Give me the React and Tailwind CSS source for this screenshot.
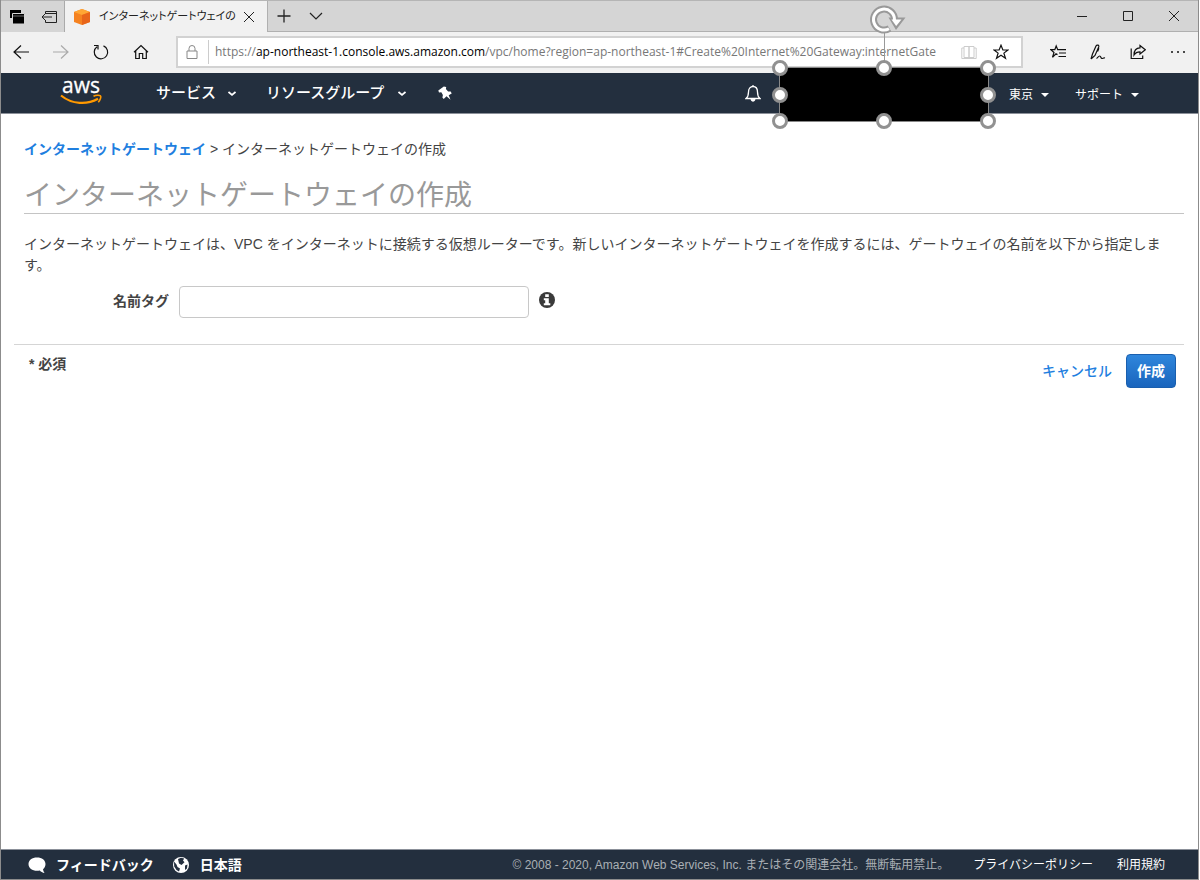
import { useState } from "react";

const jpFont = "font-['Liberation_Sans','Noto_Sans_CJK_JP',sans-serif]";

const Icon = ({ className = "w-4 h-4", viewBox = "0 0 16 16", children }) => (
  <svg
    className={`shrink-0 ${className}`}
    viewBox={viewBox}
    fill="none"
    stroke="currentColor"
    aria-hidden="true"
  >
    {children}
  </svg>
);

const Star = () => (
  <path
    d="M8 1.2 9.9 6h5l-4 3.1 1.6 5.2L8 11.2l-4.5 3.1 1.6-5.2-4-3.1h5z"
    strokeWidth="1.2"
  />
);

const TabStrip = () => (
  <div className="flex h-8 items-stretch border-t border-[#b5b5b5] bg-[#d5d5d5] text-[#222]">
    <div className="flex w-16 items-center gap-4 border-r border-[#aaa] pl-2">
      <button aria-label="保存済みのタブ">
        <Icon className="h-4 w-4">
          <path d="M1 1h11v8H1z" fill="#000" stroke="none" />
          <path d="M3.500 4.500h12v10.500h-12z" fill="#000" stroke="#d5d5d5" />
          <path d="M4 7h11" stroke="#d5d5d5" strokeWidth="0.500" />
        </Icon>
      </button>
      <button aria-label="タブを保存して閉じる">
        <Icon className="h-4 w-4">
          <path d="M4.500 5V2.500h11v11h-11V11M4.500 4.500h11M1 8h10M4 5 1 8l3 3" />
        </Icon>
      </button>
    </div>
    <div className="flex w-[202px] items-center bg-[#f1f1f1] pl-2">
      <svg className="h-[18px] w-[18px] shrink-0" viewBox="0 0 18 18" aria-hidden="true">
        <path d="M9 1l8 3v10l-8 3-8-3V4z" fill="#f58220" />
        <path d="M9 1l8 3-8 3-8-3z" fill="#ffa634" />
        <path d="M9 7l8-3v10l-8 3z" fill="#e8651a" />
      </svg>
      <span className="ml-2 w-[136px] text-[11px] whitespace-nowrap [font-feature-settings:'palt']">
        インターネットゲートウェイの
      </span>
      <button className="ml-1.5" aria-label="タブを閉じる">
        <Icon className="h-4 w-4">
          <path d="M3 3l10 10M13 3 3 13" />
        </Icon>
      </button>
    </div>
    <div className="flex flex-1 items-center gap-4 border-b border-l border-[#b0b0b0] pl-2">
      <button aria-label="新しいタブ">
        <Icon className="h-4 w-4">
          <path d="M8 1.500v13M1.500 8h13" strokeWidth="1.300" />
        </Icon>
      </button>
      <button aria-label="タブのプレビュー">
        <Icon className="h-4 w-4">
          <path d="M2 5l6 6 6-6" strokeWidth="1.200" />
        </Icon>
      </button>
      <div className="ml-auto flex items-center gap-[30px] pr-4">
        <button aria-label="最小化">
          <Icon>
            <path d="M3 8.500h10" />
          </Icon>
        </button>
        <button aria-label="最大化">
          <Icon>
            <path d="M3.500 3.500h9v9h-9z" />
          </Icon>
        </button>
        <button aria-label="閉じる">
          <Icon>
            <path d="M3 3l10 10M13 3 3 13" />
          </Icon>
        </button>
      </div>
    </div>
  </div>
);

const AddressBar = () => (
  <div className="flex h-[41px] items-center bg-[#f1f1f1] pb-px text-[#111]">
    <div className="flex items-center gap-6 pl-3">
      <button aria-label="戻る">
        <Icon>
          <path d="M16 8H1M8 1.500 1 8l7 6.500" strokeWidth="1.200" />
        </Icon>
      </button>
      <button className="text-[#aaa]" aria-label="進む">
        <Icon>
          <path d="M0 8h15M8 1.500 15 8l-7 6.500" strokeWidth="1.200" />
        </Icon>
      </button>
      <button aria-label="更新">
        <Icon>
          <path d="M10.500 1.900A6.700 6.700 0 1 1 4 2.700M1 1.500h4v4" strokeWidth="1.200" />
        </Icon>
      </button>
      <button aria-label="ホーム">
        <Icon>
          <path
            d="M1 8.200 8 1.500l7 6.700M2.700 7v7.500h3.600V9.500h3.400v5h3.600V7"
            strokeWidth="1.200"
          />
        </Icon>
      </button>
    </div>
    <div className="ml-[27px] flex h-8 w-[847px] min-w-0 items-center border-2 border-[#d2d2d2] bg-white pl-1.5">
      <Icon className="h-4 w-4 text-[#888]">
        <path d="M3 7h10v7.500H3zM5 7V4.500a3 3 0 0 1 6 0V7" />
      </Icon>
      <div className="ml-2 h-6 border-l border-[#ccc]" />
      <div className="ml-1.5 min-w-0 flex-1 font-['Open_Sans',sans-serif] text-xs whitespace-nowrap text-[#777]">
        https://<span className="text-black">ap-northeast-1.console.aws.amazon.com</span>
        /vpc/home?region=ap-northeast-1#Create%20Internet%20Gateway:internetGate
      </div>
      <button className="ml-2.5 text-[#ccc]" aria-label="読み取りビュー">
        <Icon>
          <path d="M3 2.500h5v11H3zM8 2.500h5v11H8zM3 4H.8v10.500h14.400V4H13" />
        </Icon>
      </button>
      <button className="mr-3 ml-4" aria-label="お気に入りに追加">
        <Icon>
          <Star />
        </Icon>
      </button>
    </div>
    <div className="ml-auto flex items-center gap-6 pr-3">
      <button aria-label="お気に入り">
        <Icon>
          <path
            d="M7.500 10.600 6 9.800l-3.500 3.500L4 8.500.8 5.700h4L6.200 2l1.500 3.700H16M9 9h7M8.500 12.500H16"
            strokeWidth="1.200"
          />
        </Icon>
      </button>
      <button aria-label="ノートの追加">
        <Icon>
          <path
            d="M1 15l1.500-5L6 2c.8-1.600 3.500-1 2.700 1L5 11.500 1 15M8.500 3.500c.8 1.500-.5 3-1 4M6.500 14.500c1-.5 2-2.500 3.200-2.500 1.500 0 .8 2.500 2.300 2.500 1 0 1.500-1 3-.5"
            strokeWidth="1.200"
          />
        </Icon>
      </button>
      <button aria-label="共有">
        <Icon>
          <path
            d="M1.200 4.500v10h11.500V11.500M10 1.500l5.300 4.300L10 10V7.800c-3 0-4.500.7-6 3.200 0-4 2-7.200 6-7.200z"
            strokeWidth="1.200"
          />
        </Icon>
      </button>
      <button aria-label="設定など">
        <Icon>
          <g fill="#111" stroke="none">
            <circle cx="2" cy="8" r="1" />
            <circle cx="8" cy="8" r="1" />
            <circle cx="14" cy="8" r="1" />
          </g>
        </Icon>
      </button>
    </div>
  </div>
);

const handles = [
  "left-0 top-0",
  "left-1/2 top-0",
  "left-full top-0",
  "left-0 top-1/2",
  "left-full top-1/2",
  "left-0 top-full",
  "left-1/2 top-full",
  "left-full top-full",
];

// Selected black box that covers the account name
const MaskBox = () => (
  <div className="absolute -top-[6px] left-0 z-10 h-[55px] w-full border border-[#888] bg-black">
    <div className="absolute bottom-full left-1/2 h-9 border-l border-[#999]" />
    <svg
      className="absolute -top-[66px] left-1/2 h-9 w-9 -translate-x-1/2 overflow-visible"
      viewBox="0 0 36 36"
      fill="none"
      aria-hidden="true"
    >
      <path d="M23.500 26.500A10.500 10.500 0 1 1 28.500 18" stroke="#999" strokeWidth="7" />
      <path d="M22.500 15.500H39.500L30 28z" fill="#999" />
      <path d="M23 26.800A10.500 10.500 0 1 1 28.500 18" stroke="#fff" strokeWidth="3" />
      <path d="M25.500 17.500h10L30.200 24z" fill="#fff" />
    </svg>
    {handles.map((place) => (
      <span
        key={place}
        className={`absolute h-4 w-4 -translate-x-1/2 -translate-y-1/2 rounded-full border-3 border-[#919191] bg-white ${place}`}
      />
    ))}
  </div>
);

const Chevron = () => (
  <Icon className="h-2 w-2" viewBox="0 0 8 8">
    <path d="M0.500 3 4 6l3.500-3" strokeWidth="1.700" />
  </Icon>
);

const Caret = () => (
  <Icon className="h-2 w-2" viewBox="0 0 8 8">
    <path d="M0 2h8L4 6z" fill="currentColor" stroke="none" />
  </Icon>
);

const NavBar = () => (
  <nav className="flex h-[41px] items-center border-b border-[#8b9099] bg-[#232f3e] text-white">
    <a href="#home" className="ml-[58px] block" aria-label="aws">
      <svg className="h-10 w-11 overflow-visible" viewBox="0 -4 44 40" aria-hidden="true">
        <text
          x="22"
          y="16"
          textAnchor="middle"
          fill="#fff"
          stroke="#fff"
          strokeWidth="0.300"
          fontSize="21"
          fontFamily="Open Sans"
          fontWeight="500"
        >
          aws
        </text>
        <path d="M2 18.500c11 9 26 9.500 37 3.200" stroke="#f90" strokeWidth="2.200" fill="none" />
        <path d="M34.500 19.300c2.500-1.300 6-1.300 7-.5s-.3 4.500-2.200 6.500" stroke="#f90" strokeWidth="1.600" fill="none" />
      </svg>
    </a>
    <button className="ml-[53px] flex items-center gap-3 text-[15px] font-medium">
      サービス
      <Chevron />
    </button>
    <button className="ml-[30px] flex items-center gap-3.5 text-[15px] font-medium">
      リソースグループ
      <Chevron />
    </button>
    <button className="ml-8" aria-label="ショートカットを固定">
      <Icon className="h-3.5 w-3.5" viewBox="0 0 14 14">
        <path
          d="M5.800.5 8.200 1l-.3 2 2.200 2.600 2.600-.2 1 2-3 1.800 1.800 4.600-4-3.500-2.800 2.700-1.300-1.500.5-2.600L3.300 6.300 1 6.500.3 4.500z"
          fill="#fff"
          stroke="none"
        />
      </Icon>
    </button>
    <div className="ml-auto flex items-center self-stretch pr-[59px]">
      <button aria-label="お知らせ">
        <Icon className="h-[18px] w-4" viewBox="0 0 16 18">
          <path
            d="M8 1v1.500M1 14.500c2-1.500 2.500-3 2.500-6.500 0-3.500 2-5.500 4.500-5.500s4.500 2 4.500 5.500c0 3.500.5 5 2.500 6.500z"
            strokeWidth="1.300"
          />
          <path d="M6 15.200h4a2 2 0 0 1-4 0z" fill="#fff" />
        </Icon>
      </button>
      <div className="relative ml-[18px] w-[210px] self-stretch">
        <MaskBox />
      </div>
      <button className="ml-5 flex items-center gap-2 pt-1 text-xs">
        東京
        <Caret />
      </button>
      <button className="ml-[26px] flex items-center gap-2 pt-1 text-xs">
        サポート
        <Caret />
      </button>
    </div>
  </nav>
);

const CreateGateway = () => {
  const [name, setName] = useState("");

  return (
    <main className="flex-1 pr-3.5 pl-[13px] text-sm leading-[21px] text-[#444]">
      <div className="pt-[25px] pl-2.5">
        <a href="#igws" className="font-bold text-[#1f7fdf]">
          インターネットゲートウェイ
        </a>{" "}
        &gt; インターネットゲートウェイの作成
      </div>
      <h1 className="mt-[19px] ml-2.5 border-b border-[#c4c4c4] text-[28px] leading-[34px] font-normal text-[#999]">
        インターネットゲートウェイの作成
      </h1>
      <p className="mt-5 ml-2.5">
        インターネットゲートウェイは、VPC をインターネットに接続する仮想ルーターです。新しいインターネットゲートウェイを作成するには、ゲートウェイの名前を以下から指定します。
      </p>
      <form onSubmit={(e) => e.preventDefault()}>
        <div className="mt-2.5 flex items-center">
          <label htmlFor="name-tag" className="w-[155px] pb-0.5 text-right font-bold">
            名前タグ
          </label>
          <input
            id="name-tag"
            type="text"
            value={name}
            onChange={(e) => setName(e.target.value)}
            className="ml-2.5 h-8 w-[350px] rounded border border-[#c8c8c8] bg-white px-2 outline-none"
          />
          <button type="button" className="ml-2.5 pb-1" aria-label="情報">
            <svg className="h-4 w-4" viewBox="0 0 16 16" aria-hidden="true">
              <circle cx="8" cy="8" r="8" fill="#3a3a3a" />
              <path d="M6.200 2.200h3.600V5H6.200zM4.800 6.200h5v5h1.500V13.200H4.800v-2h1.400V8.200H4.800z" fill="#fff" />
            </svg>
          </button>
        </div>
        <div className="mt-[26px] flex items-start justify-between border-t border-[#d5d5d5] pt-[9px] pr-2 pl-[15px]">
          <span className="font-bold">* 必須</span>
          <div className="flex items-center gap-3.5">
            <a href="#cancel" className="font-medium text-[#1f7fdf]">
              キャンセル
            </a>
            <button
              type="submit"
              className="h-[34px] w-[50px] rounded border border-[#1a5fae] bg-linear-to-b from-[#2f86dc] to-[#1a65bd] font-bold text-white"
            >
              作成
            </button>
          </div>
        </div>
      </form>
    </main>
  );
};

const Footer = () => (
  <footer className="flex h-[30px] items-center border-t border-[#8b9099] bg-[#232f3e] pr-[33px] pl-[27px] text-xs text-white">
    <button className="flex items-center gap-2.5 text-sm font-bold">
      <Icon className="h-[18px] w-[18px]" viewBox="0 0 18 18">
        <path
          d="M9 1.500c5 0 8.500 2.700 8.500 6.500 0 2.200-1 4-2.500 5.200.2 1.500.7 2.600 1.500 3.800-2-.3-3.500-1.200-4.700-2.500-6 1.200-11.300-1.500-11.300-6.500C.5 4.200 4 1.500 9 1.500z"
          fill="#fff"
          stroke="none"
        />
      </Icon>
      フィードバック
    </button>
    <button className="ml-[18px] flex items-center gap-2.5 text-sm font-bold">
      <Icon className="h-[18px] w-[18px]" viewBox="0 0 18 18">
        <circle cx="9" cy="9" r="8" fill="#fff" stroke="none" />
        <path
          d="M6 3 9 1.800l3.200.7L11 4.500l1.500 1.800L9.500 9 7 7.500zM2 5.500l2.500 3 1 2.500 2.500 1.500-1 3-2.500-1.500-2.300-3.500zM13 9.500l2.500-1-.5 4-2 1.500z"
          fill="#232f3e"
          stroke="none"
        />
      </Icon>
      日本語
    </button>
    <span className="ml-auto text-[#aab0b5]">
      © 2008 - 2020, Amazon Web Services, Inc. またはその関連会社。無断転用禁止。
    </span>
    <a href="#privacy" className="ml-6">
      プライバシーポリシー
    </a>
    <a href="#terms" className="ml-6">
      利用規約
    </a>
  </footer>
);

export default function App() {
  return (
    <div className={`min-h-screen bg-white pr-px ${jpFont}`}>
      <div className="flex min-h-screen flex-col border-r border-b border-l border-[#8c8c8c]">
        <TabStrip />
        <AddressBar />
        <NavBar />
        <CreateGateway />
        <Footer />
      </div>
    </div>
  );
}
